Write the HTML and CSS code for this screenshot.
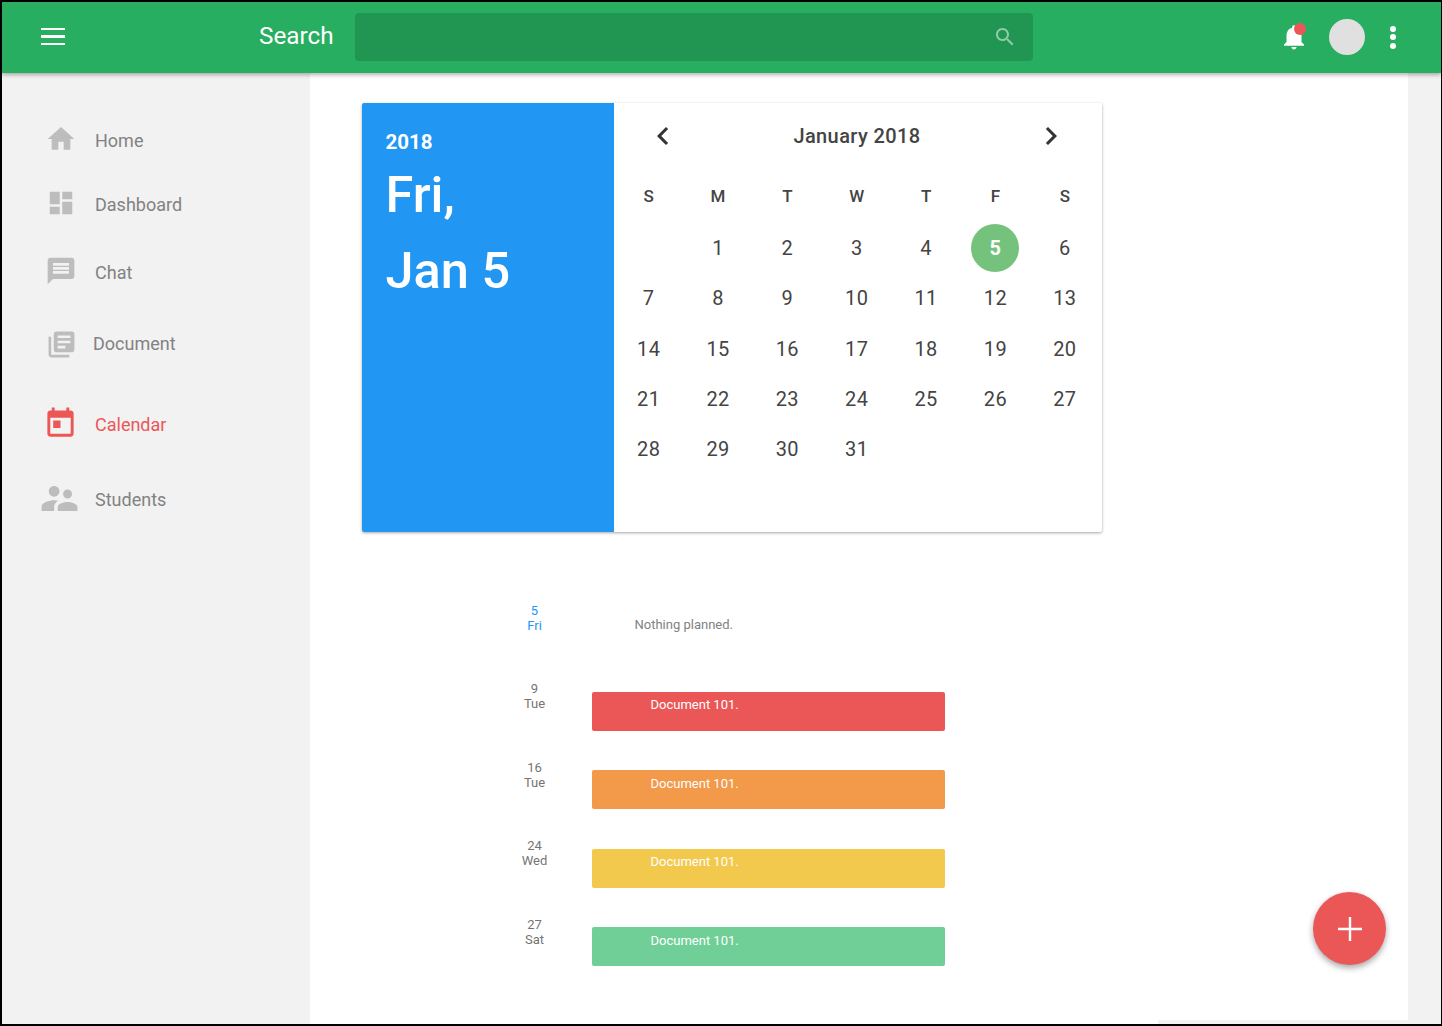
FILE: index.html
```html
<!DOCTYPE html>
<html lang="en">
<head>
  <meta charset="UTF-8">
  <meta name="viewport" content="width=device-width, initial-scale=1.0">
  <title>Calendar</title>
  <link rel="stylesheet" href="styles.css">
</head>
<body>
  <div class="frame">
    <header class="topbar">
      <div class="burger"><span></span><span></span><span></span></div>
      <div class="search-label">Search</div>
      <div class="search-box">
        <svg class="search-icon" viewBox="0 0 24 24"><path d="M15.5 14h-.79l-.28-.27C15.41 12.59 16 11.11 16 9.5 16 5.91 13.09 3 9.5 3S3 5.91 3 9.5 5.91 16 9.5 16c1.61 0 3.09-.59 4.23-1.57l.27.28v.79l5 4.99L20.49 19l-4.99-5zm-6 0C7.01 14 5 11.99 5 9.5S7.01 5 9.5 5 14 7.01 14 9.5 11.99 14 9.5 14z"/></svg>
      </div>
      <div class="bell">
        <svg viewBox="0 0 24 24"><path d="M12 22c1.1 0 2-.9 2-2h-4c0 1.1.89 2 2 2zm6-6v-5c0-3.07-1.64-5.64-4.5-6.32V4c0-.83-.67-1.5-1.5-1.5s-1.5.67-1.5 1.5v.68C7.63 5.36 6 7.92 6 11v5l-2 2v1h16v-1l-2-2z"/></svg>
        <span class="bell-dot"></span>
      </div>
      <div class="avatar"></div>
      <div class="more"><span></span><span></span><span></span></div>
    </header>

    <div class="content">
      <nav class="sidebar">
        <a class="nav-item nav-home">
          <span class="nav-icon"><svg class="ic-32" viewBox="0 0 24 24"><path d="M10 20v-6h4v6h5v-8h3L12 3 2 12h3v8z"/></svg></span>
          <span class="nav-text">Home</span>
        </a>
        <a class="nav-item nav-dash">
          <span class="nav-icon"><svg class="ic-30" viewBox="0 0 24 24"><path d="M3 13h8V3H3v10zm0 8h8v-6H3v6zm10 0h8V11h-8v10zm0-18v6h8V3h-8z"/></svg></span>
          <span class="nav-text">Dashboard</span>
        </a>
        <a class="nav-item nav-chat">
          <span class="nav-icon"><svg class="ic-32" viewBox="0 0 24 24"><path d="M20 2H4c-1.1 0-1.99.9-1.99 2L2 22l4-4h14c1.1 0 2-.9 2-2V4c0-1.1-.9-2-2-2zm-2 12H6v-2h12v2zm0-3H6V9h12v2zm0-3H6V6h12v2z"/></svg></span>
          <span class="nav-text">Chat</span>
        </a>
        <a class="nav-item nav-doc">
          <span class="nav-icon"><svg class="ic-31" viewBox="0 0 24 24"><path d="M4 6H2v14c0 1.1.9 2 2 2h14v-2H4V6zm16-4H8c-1.1 0-2 .9-2 2v12c0 1.1.9 2 2 2h12c1.1 0 2-.9 2-2V4c0-1.1-.9-2-2-2zm-1 9H9V9h10v2zm-4 4H9v-2h6v2zm4-8H9V5h10v2z"/></svg></span>
          <span class="nav-text">Document</span>
        </a>
        <a class="nav-item nav-cal active">
          <span class="nav-icon"><svg class="ic-35" viewBox="0 0 24 24"><path d="M19 3h-1V1h-2v2H8V1H6v2H5c-1.11 0-1.99.9-1.99 2L3 19c0 1.1.89 2 2 2h14c1.1 0 2-.9 2-2V5c0-1.1-.9-2-2-2zm0 16H5V8h14v11zM7 10h5v5H7z"/></svg></span>
          <span class="nav-text">Calendar</span>
        </a>
        <a class="nav-item nav-students">
          <span class="nav-icon"><svg class="ic-43" viewBox="0 0 24 24"><path d="M16.5 12c1.38 0 2.49-1.12 2.49-2.5S17.88 7 16.5 7C15.12 7 14 8.12 14 9.5s1.12 2.5 2.5 2.5zM9 11c1.66 0 2.99-1.34 2.99-3S10.66 5 9 5C7.34 5 6 6.34 6 8s1.34 3 3 3zm7.5 3c-1.83 0-5.5.92-5.5 2.75V19h11v-2.25c0-1.83-3.67-2.75-5.5-2.75zM9 13c-2.33 0-7 1.17-7 3.5V19h7v-2.25c0-.85.33-2.34 2.37-3.47C10.5 13.1 9.66 13 9 13z"/></svg></span>
          <span class="nav-text">Students</span>
        </a>
      </nav>

      <main class="main">
        <section class="picker">
          <div class="picker-side">
            <div class="picker-year">2018</div>
            <div class="picker-date">Fri,<br>Jan 5</div>
          </div>
          <div class="picker-body">
            <div class="month-row">
              <svg class="chev" viewBox="0 0 24 24"><path d="M15.41 7.41L14 6l-6 6 6 6 1.41-1.41L10.83 12z"/></svg>
              <div class="month-name">January 2018</div>
              <svg class="chev" viewBox="0 0 24 24"><path d="M10 6L8.59 7.41 13.17 12l-4.58 4.59L10 18l6-6z"/></svg>
            </div>
            <div class="days">
              <div class="wd">S</div><div class="wd">M</div><div class="wd">T</div><div class="wd">W</div><div class="wd">T</div><div class="wd">F</div><div class="wd">S</div>
              <div class="day"></div><div class="day">1</div><div class="day">2</div><div class="day">3</div><div class="day">4</div><div class="day"><span class="selected">5</span></div><div class="day">6</div>
              <div class="day">7</div><div class="day">8</div><div class="day">9</div><div class="day">10</div><div class="day">11</div><div class="day">12</div><div class="day">13</div>
              <div class="day">14</div><div class="day">15</div><div class="day">16</div><div class="day">17</div><div class="day">18</div><div class="day">19</div><div class="day">20</div>
              <div class="day">21</div><div class="day">22</div><div class="day">23</div><div class="day">24</div><div class="day">25</div><div class="day">26</div><div class="day">27</div>
              <div class="day">28</div><div class="day">29</div><div class="day">30</div><div class="day">31</div>
            </div>
          </div>
        </section>

        <section class="agenda">
          <div class="agenda-row today">
            <div class="agenda-date">5<br>Fri</div>
            <div class="nothing">Nothing planned.</div>
          </div>
          <div class="agenda-row">
            <div class="agenda-date">9<br>Tue</div>
            <div class="event ev-red">Document 101.</div>
          </div>
          <div class="agenda-row">
            <div class="agenda-date">16<br>Tue</div>
            <div class="event ev-orange">Document 101.</div>
          </div>
          <div class="agenda-row">
            <div class="agenda-date">24<br>Wed</div>
            <div class="event ev-yellow">Document 101.</div>
          </div>
          <div class="agenda-row">
            <div class="agenda-date">27<br>Sat</div>
            <div class="event ev-green">Document 101.</div>
          </div>
        </section>

        <div class="main-foot"></div>
      </main>
    </div>

    <button class="fab">
      <svg viewBox="0 0 24 24"><path d="M10.8 0h2.4v24h-2.4zM0 10.8h24v2.4H0z"/></svg>
    </button>
  </div>
</body>
</html>
```

FILE: styles.css
```css
* {
  box-sizing: border-box;
}
html, body {
  margin: 0;
  height: 100%;
  overflow: hidden;
}
body {
  background: #000;
  font-family: Roboto, "Liberation Sans", sans-serif;
}
.frame {
  position: relative;
  width: 1442px;
  height: 1026px;
  border: 2px solid #000;
  border-right-width: 1px;
  background: #f2f2f2;
  display: flex;
  flex-direction: column;
}

/* top bar */
.topbar {
  position: relative;
  z-index: 2;
  height: 71px;
  flex: none;
  display: flex;
  align-items: center;
  padding-left: 39px;
  background: #27ae60;
  box-shadow: 0 2px 4px rgba(0, 0, 0, 0.3);
  color: #fff;
}
.burger {
  width: 24px;
  margin-top: -2px;
  display: flex;
  flex-direction: column;
  gap: 5px;
}
.burger span {
  height: 2.5px;
  background: #fff;
}
.search-label {
  margin-left: 194px;
  margin-top: -4px;
  width: 74px;
  font-size: 24.3px;
}
.search-box {
  margin-left: 22px;
  width: 678px;
  height: 48px;
  margin-top: -1px;
  border-radius: 4px;
  background: #219653;
  display: flex;
  align-items: center;
  justify-content: flex-end;
  padding-right: 16px;
}
.search-icon {
  width: 24px;
  height: 24px;
  fill: rgba(255, 255, 255, 0.5);
}
.bell {
  position: relative;
  margin-left: 246px;
  width: 30px;
  height: 30px;
  margin-top: -1px;
}
.bell svg {
  display: block;
  width: 30px;
  height: 30px;
  fill: #fff;
}
.bell-dot {
  position: absolute;
  left: 15px;
  top: 1px;
  width: 12px;
  height: 12px;
  border-radius: 50%;
  background: #eb5757;
}
.avatar {
  margin-left: 20px;
  width: 36px;
  height: 36px;
  margin-top: -1px;
  border-radius: 50%;
  background: #e0e0e0;
}
.more {
  margin-left: 25px;
  margin-top: -1px;
  display: flex;
  flex-direction: column;
  gap: 2.5px;
}
.more span {
  width: 6px;
  height: 6px;
  border-radius: 50%;
  background: #fff;
}

/* sidebar */
.content {
  flex: 1;
  display: flex;
  min-height: 0;
}
.sidebar {
  width: 308px;
  flex: none;
  padding: 46px 0 0 36px;
  background: #f2f2f2;
}
.nav-item {
  display: flex;
  align-items: center;
  height: 40px;
  font-size: 18px;
  color: #828282;
}
.nav-icon {
  width: 46px;
  display: flex;
  justify-content: center;
  margin-right: 11px;
}
.nav-icon svg {
  display: block;
  fill: #bdbdbd;
  flex: none;
}
.nav-text {
  padding-top: 2px;
}
.ic-30 { width: 30px; height: 30px; }
.ic-31 { width: 31px; height: 31px; }
.ic-32 { width: 32px; height: 32px; }
.ic-35 { width: 35px; height: 35px; margin-left: -2px; }
.ic-43 { width: 43px; height: 43px; margin-left: -4px; }
.nav-home { margin-bottom: 24px; }
.nav-dash { margin-bottom: 28px; }
.nav-chat { margin-bottom: 33px; }
.nav-doc { margin-bottom: 39px; }
.nav-doc .nav-icon { margin-right: 9px; }
.nav-doc .nav-text { padding: 0 0 2px; }
.nav-cal { margin-bottom: 35px; }
.active { color: #eb5757; }
.active .nav-icon svg { fill: #eb5757; }

/* main column */
.main {
  width: 1098px;
  flex: none;
  background: #fff;
  padding: 30px 0 0 52px;
  display: flex;
  flex-direction: column;
}
.picker {
  width: 740px;
  height: 429px;
  flex: none;
  display: flex;
  background: #fff;
  border-radius: 2px;
  box-shadow: 0 1px 3px rgba(0, 0, 0, 0.35);
}
.picker-side {
  width: 252px;
  padding: 25px 24px 25px 23.5px;
  background: #2196f3;
  color: #fff;
  border-radius: 2px 0 0 2px;
}
.picker-year {
  font-size: 20.5px;
  line-height: 28px;
  font-weight: 700;
}
.picker-date {
  margin-top: 1px;
  font-size: 50.5px;
  line-height: 76px;
  font-weight: 500;
}
.picker-body {
  flex: 1;
  color: #444;
}
.month-row {
  height: 66px;
  padding: 0 33px 0 31px;
  display: flex;
  align-items: center;
  justify-content: space-between;
}
.month-name {
  font-size: 20px;
  font-weight: 500;
  letter-spacing: 0.4px;
}
.chev {
  width: 36px;
  height: 36px;
  fill: #333;
}
.days {
  width: 485.5px;
  display: grid;
  grid-template-columns: repeat(7, 1fr);
  grid-template-rows: 54px;
  grid-auto-rows: 50.3px;
}
.wd, .day {
  display: flex;
  align-items: center;
  justify-content: center;
}
.wd {
  font-size: 17px;
  font-weight: 500;
}
.day {
  font-size: 20px;
  letter-spacing: 0.4px;
}
.selected {
  width: 48px;
  height: 48px;
  border-radius: 50%;
  background: #74c27c;
  color: #fff;
  font-weight: 700;
  display: flex;
  align-items: center;
  justify-content: center;
}

/* agenda */
.agenda {
  margin: 70px 0 0 143px;
  flex: none;
}
.agenda-row {
  height: 78.5px;
  display: flex;
  align-items: flex-start;
  gap: 28px;
}
.agenda-date {
  width: 59px;
  padding-top: 0.5px;
  text-align: center;
  font-size: 13px;
  line-height: 15px;
  color: #757575;
}
.today .agenda-date {
  color: #2196f3;
}
.nothing {
  margin: 15px 0 0 42.5px;
  font-size: 13px;
  line-height: 15px;
  color: #828282;
}
.event {
  width: 353px;
  height: 39px;
  margin-top: 11px;
  padding: 5.5px 0 0 58.5px;
  border-radius: 2px;
  font-size: 13px;
  line-height: 15px;
  color: #fff;
}
.ev-red { background: #eb5757; }
.ev-orange { background: #f2994a; }
.ev-yellow { background: #f2c94c; }
.ev-green { background: #6fcf97; }
.main-foot {
  margin-top: auto;
  align-self: flex-end;
  width: 250px;
  height: 4px;
  background: #f2f2f2;
}

/* floating button */
.fab {
  position: absolute;
  left: 1311px;
  top: 890px;
  width: 73px;
  height: 73px;
  padding: 0;
  border: none;
  border-radius: 50%;
  background: #eb5757;
  box-shadow: 0 3px 6px rgba(0, 0, 0, 0.35);
  display: flex;
  align-items: center;
  justify-content: center;
}
.fab svg {
  width: 24px;
  height: 24px;
  fill: #fff;
}
```
